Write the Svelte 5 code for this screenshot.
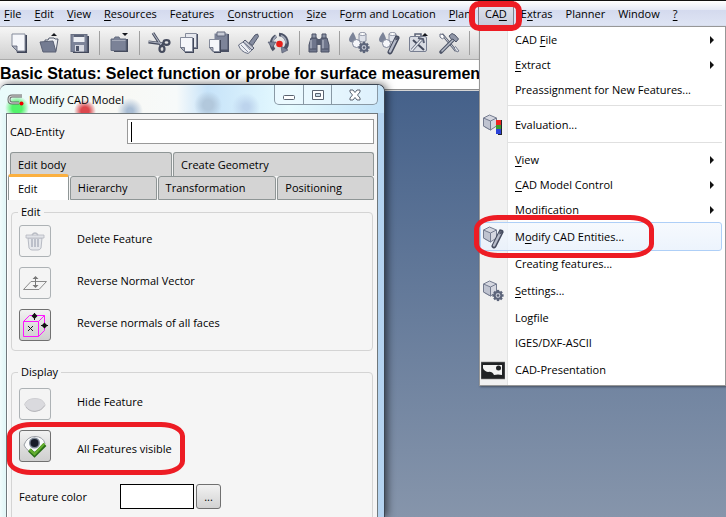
<script lang="ts">
	type MenuEntry = {
		label?: string;
		icon?: string;
		submenu?: boolean;
		active?: boolean;
		separator?: boolean;
	};

	// an underscore marks the mnemonic letter that follows it
	const menus = [
		'_File',
		'_Edit',
		'_View',
		'_Resources',
		'Fe_atures',
		'_Construction',
		'_Size',
		'F_orm and Location',
		'_Plan',
		'CA_D',
		'E_xtras',
		'Planner',
		'Window',
		'_?'
	];

	const tools = [
		'new',
		'open',
		'save',
		'|',
		'folder',
		'|',
		'cut',
		'copy',
		'paste',
		'brush',
		'rotate',
		'|',
		'find',
		'|',
		'feature settings',
		'feature edit',
		'toolbox',
		'tools',
		'|'
	];

	const cadMenu: MenuEntry[] = [
		{ label: 'CAD _File', submenu: true },
		{ label: '_Extract', submenu: true },
		{ label: 'Preassignment for New Features...' },
		{ separator: true },
		{ label: 'Evaluation...', icon: 'evaluation' },
		{ separator: true },
		{ label: '_View', submenu: true },
		{ label: '_CAD Model Control', submenu: true },
		{ label: '_Modification', submenu: true },
		{ label: 'M_odify CAD Entities...', icon: 'modify', active: true },
		{ label: 'Creating features...' },
		{ label: '_Settings...', icon: 'settings' },
		{ label: 'Logfile' },
		{ label: 'IGES/DXF-ASCII' },
		{ label: 'CAD-Presentation', icon: 'presentation' }
	];

	const editActions = [
		{ id: 'delete', label: 'Delete Feature', disabled: true },
		{ id: 'normal', label: 'Reverse Normal Vector', disabled: true },
		{ id: 'faces', label: 'Reverse normals of all faces', disabled: false }
	];

	const displayActions = [
		{ id: 'hide', label: 'Hide Feature', disabled: true },
		{ id: 'show', label: 'All Features visible', disabled: false }
	];

	const teeth = [0, 45, 90, 135, 180, 225, 270, 315];

	let tab = $state('Edit');
	let entity = $state('');

	function split(label: string) {
		const i = label.indexOf('_');
		if (i < 0) return [label, '', ''];
		return [label.slice(0, i), label[i + 1], label.slice(i + 2)];
	}
</script>

{#snippet mnemonic(label: string)}
	{@const parts = split(label)}
	<span>{parts[0]}{#if parts[1]}<u>{parts[1]}</u>{/if}{parts[2]}</span>
{/snippet}

{#snippet gear(x: number, y: number)}
	<g transform="translate({x} {y})">
		{#each teeth as a}
			<rect x="-1.2" y="-5.6" width="2.4" height="3" fill="#5c647a" transform="rotate({a})" />
		{/each}
		<circle r="3.4" fill="#c3c7d3" stroke="#5c647a" stroke-width="2" />
		<circle r="1.2" fill="#555c70" />
	</g>
{/snippet}

{#snippet solids()}
	<path d="M6 1Q2 6.500 2 8.500a3.500 3 0 0 0 7 0Q9 6 6 1Z" fill="#7b8398" />
	<path d="M12 3v7q3.500 2 7 0V3Z" fill="#dfe2ea" stroke="#777e92" stroke-width=".8" />
	<ellipse cx="15.500" cy="3" rx="3.500" ry="1.500" fill="#fff" stroke="#777e92" stroke-width=".8" />
	<circle cx="9.500" cy="12.500" r="4" fill="#f5f6fa" stroke="#7c8396" />
{/snippet}

{#snippet wrench()}
	<path d="m13 21 7-14" stroke="#454b5e" stroke-width="5" stroke-linecap="round" />
	<path d="m13 20.500 6.500-13" stroke="#b6bbc9" stroke-width="2.400" stroke-linecap="round" />
	<path d="M19 4.500v4l3-1.500" fill="none" stroke="#454b5e" stroke-width="1.200" />
{/snippet}

{#snippet cube()}
	<path d="m8.500 2 7 3v8l-6 4-7-4V5Z" fill="#d5d7e0" stroke="#747b8f" />
	<path d="m2.500 5 7 3v9l-7-4Z" fill="#bfc3d0" />
	<path d="m2.500 5 7 3 6-3M9.500 8v9M2.500 5v8l7 4" fill="none" stroke="#747b8f" />
{/snippet}

{#snippet hammer()}
	<path d="M5 3 19 20" stroke="#565d70" stroke-width="2.400" />
	<path d="M5 3 19 20" stroke="#d4d7df" stroke-width=".9" />
	<path d="m3 3 3 .500 1.500 2.500-2 2L3 6Z" fill="#fff" stroke="#6a7184" />
	<path d="M17 8 4 21" stroke="#4d5467" stroke-width="3.600" stroke-linecap="round" />
	<path d="M16.500 8.500 4.500 20.500" stroke="#b8bdca" stroke-width="1.400" />
	<path d="m12 5 3-2.500 3 1.500 3.500 4-2.500 3-3-3-1.500.500Z" fill="#9197a8" stroke="#4d5467" />
	<path d="m17 17 3 4 2-1-3.500-4.500Z" fill="#e1e4ea" stroke="#60677a" stroke-width=".8" />
{/snippet}

{#snippet icon(name: string)}
	<svg class="icon" viewBox="0 0 24 24" aria-hidden="true">
		{#if name === 'new'}
			<path d="M6 4h14v18H10Z" fill="#3f4558" />
			<path d="M5 3h13v17h-8l-5-5Z" fill="#f5f6fa" stroke="#858b9b" />
			<path d="M5 15h5v5Z" fill="#aeb3c0" stroke="#5a6175" stroke-width=".8" />
		{:else if name === 'open'}
			<path d="M8 9h3l1-2h5l1 1h3l-2 12H8Z" fill="#eceef2" stroke="#535a6c" />
			<path d="m3 11 13-1 3 11H6Z" fill="#747c92" stroke="#5a6175" />
			<path d="m14 5 3-3 3 3Z" fill="#15171d" />
		{:else if name === 'save'}
			<path d="M5 5h17v17H6Z" fill="#414759" />
			<rect x="4" y="3.500" width="16" height="17" fill="#7d8499" stroke="#686f83" />
			<rect x="6.500" y="4" width="11" height="7" fill="#eceef3" />
			<rect x="6.500" y="4" width="11" height="2" fill="#5b6277" />
			<rect x="8" y="14" width="9" height="6.500" fill="#d8dae2" />
			<rect x="9" y="15" width="3" height="5" fill="#50576b" />
		{:else if name === 'folder'}
			<path d="M6 8h15v13H7Z" fill="#454b5d" />
			<path d="M4 8h3l1-2h4l1 2h6v11.500H4Z" fill="#7b8297" stroke="#656c80" />
			<path d="M5 9.500h13.500" stroke="#a6abba" />
			<path d="M15 2h6l-3 3Z" fill="#15171d" />
		{:else if name === 'cut'}
			<path d="m6 2 9 14M1.500 11 17 13" fill="none" stroke="#454b5d" stroke-width="3" />
			<path d="m6 2 8 12M1.500 10.500 15 12.500" fill="none" stroke="#adb2c0" stroke-width="1.200" />
			<ellipse cx="15" cy="18" rx="2.500" ry="3" fill="none" stroke="#454b5d" stroke-width="2.200" />
			<ellipse cx="19.500" cy="11.500" rx="3" ry="2.300" fill="none" stroke="#454b5d" stroke-width="2.200" />
		{:else if name === 'copy'}
			<path d="M9 3h12v15H9Z" fill="#4a5064" />
			<path d="M8.500 2.500h11v14h-11Z" fill="#e6e8ee" stroke="#858b9b" />
			<path d="M5 7h12v15H8Z" fill="#414759" />
			<path d="M3.500 6.500h12v14h-8l-4-4Z" fill="#f5f6fa" stroke="#858b9b" />
			<path d="M3.500 16.500h4v4Z" fill="#aeb3c0" stroke="#5a6175" stroke-width=".8" />
		{:else if name === 'paste'}
			<path d="M8 3h14v18H8Z" fill="#4a5064" />
			<path d="M7.500 2.500h13v16h-13Z" fill="#7d8499" />
			<path d="M10 1h8v4h-8Z" fill="#c8ccd7" stroke="#60677a" />
			<path d="M4 9h10v13H7Z" fill="#414759" />
			<path d="M2.500 8.500h10v12H6l-3.500-4Z" fill="#f5f6fa" stroke="#858b9b" />
			<path d="M2.500 16.500H6v4Z" fill="#aeb3c0" stroke="#5a6175" stroke-width=".8" />
		{:else if name === 'brush'}
			<path d="m12 12 6-8 2.500-1 1 2.500-6 9Z" fill="#858ca0" stroke="#50576b" />
			<path d="m8 9 9 8-2 2-9-8Z" fill="#c7cad5" stroke="#50576b" />
			<path d="m6 11 9 8-4 3.500c-5-1-8-4-9.500-8.500Z" fill="#eceef3" stroke="#666d81" />
			<path d="m4 14 7 7M7 12l6 7" stroke="#838a9d" />
		{:else if name === 'rotate'}
			<path d="M9 5a9 9 0 0 0-2 14M12 3.500a8.500 8.500 0 0 1 5 15" fill="none" stroke="#4c5366" stroke-width="3.600" />
			<path d="M9.500 5a8 8 0 0 0-3.500 7M14 4.500a8 8 0 0 1 5 8" fill="none" stroke="#a4aaba" stroke-width="1.600" />
			<path d="M1 11h8l-4 6Z" fill="#7b8297" stroke="#4c5366" stroke-width=".6" />
			<path d="m14 15 1 7 6-3Z" fill="#7b8297" stroke="#4c5366" stroke-width=".6" />
			<circle cx="12.500" cy="13" r="3.300" fill="#e71f19" />
		{:else if name === 'find'}
			<path d="M4 7h6v14H2v-7ZM14 7h6l2 7v7h-8Z" fill="#6f768c" stroke="#4a5165" />
			<path d="M5 3h4v4H5Zm10 0h4v4h-4Z" fill="#8c93a6" stroke="#4a5165" />
			<path d="M10 8h4v6h-4Z" fill="#555c70" />
			<path d="M4 9v9M16 9v9" stroke="#a7acba" stroke-width="1.500" />
			<path d="M2.500 18h7M14.500 18h7" stroke="#4a5165" />
		{:else if name === 'feature settings'}
			{@render solids()}
			{@render gear(17, 16.5)}
		{:else if name === 'feature edit'}
			{@render solids()}
			{@render wrench()}
		{:else if name === 'toolbox'}
			<path d="M8 5V3h6v2" fill="none" stroke="#5a6175" stroke-width="1.500" />
			<rect x="2.500" y="5.500" width="17" height="15" rx="1.500" fill="#d9dce3" stroke="#777e91" />
			<path d="m6 9 11 10" stroke="#454b5d" stroke-width="2" />
			<path d="m5 19 9-10" stroke="#6a7184" stroke-width="3" />
			<path d="m5 19 9-10" stroke="#eef0f4" stroke-width="1.200" />
			<path d="m11 7 5 1 1 4" fill="none" stroke="#555c70" stroke-width="2" />
			<path d="m15 5 3-3 3 3Z" fill="#15171d" />
		{:else if name === 'tools'}
			{@render hammer()}
		{:else if name === 'evaluation'}
			{@render cube()}
			<path d="M16 7h5v15h-4Z" fill="#24272f" />
			<rect x="15" y="7" width="5" height="5" fill="#ee2421" />
			<rect x="15" y="12" width="5" height="4" fill="#3e9b2d" />
			<rect x="15" y="16" width="5" height="5" fill="#2b42d7" />
		{:else if name === 'modify'}
			{@render cube()}
			{@render wrench()}
		{:else if name === 'settings'}
			{@render cube()}
			{@render gear(17, 16.5)}
		{:else if name === 'presentation'}
			<path d="M0 4h24v17H0Z" fill="#202224" />
			<path d="M2 7h19v10q-4-1-8 0-2-4-6-3-4-1-5-4Z" fill="#f3f3f3" />
			<circle cx="17.500" cy="10" r="2.500" fill="#202224" />
			<path d="M0 4h24v17H0Z" fill="none" stroke="#8b8b8b" stroke-width=".6" />
		{:else if name === 'delete'}
			<path d="m5 9 1 10q1 2 3 2h6q2 0 3-2l1-10Z" fill="#e6e8ec" stroke="#b7bac3" />
			<path d="M3 6h18v3H3Z" fill="#e1e3e8" stroke="#b5b8c0" stroke-width=".8" />
			<path d="M9 6q3-4 6 0" fill="none" stroke="#b9bcc4" stroke-width="1.400" />
			<path d="M9 10v8M12 10v8M15 10v8" stroke="#aeb2be" stroke-width="1.500" />
		{:else if name === 'normal'}
			<path d="M.500 18.500 8 10.500h15.500l-7.500 8Z" fill="none" stroke="#8a8a8a" />
			<path d="M12.500 6v10" stroke="#777" />
			<path d="m9.500 8 3-3 3 3ZM9.500 14h6l-3 3Z" fill="#777" />
		{:else if name === 'hide'}
			<path d="M1.500 12.500Q4 6.500 12 6.500t10 6Q19 19 12 19T1.500 12.500Z" fill="#dadade" stroke="#ceced2" />
			<path d="M3 15q3 4.500 9 4.500t10-6" fill="none" stroke="#b8b8bd" />
		{:else if name === 'show'}
			<path d="M1 11Q4 2.500 12 2.500t10 7Q18 18 11 18T1 11Z" fill="#fafbfc" stroke="#9a9ea5" />
			<circle cx="11.500" cy="9" r="5.500" fill="#7d8796" />
			<circle cx="11.500" cy="9" r="4" fill="#171c27" />
			<path d="m6.500 16 5 5L22 10.500" fill="none" stroke="#286d16" stroke-width="4" />
			<path d="m6.500 15.500 5 4.500L21.500 9.500" fill="none" stroke="#63ad2e" stroke-width="2.400" />
		{/if}
	</svg>
{/snippet}

{#snippet facesIcon()}
	<svg class="faces" viewBox="0 0 30 30" aria-hidden="true">
		<path d="M3.500 11.500h15v15h-15ZM3.500 11.500l6-6h15l-6 6M24.500 5.500v15l-6 6" fill="none" stroke="#ff14ff" />
		<path d="m8 16 5 5m0-5-5 5" stroke="#222" />
		<path d="M14.500 3v7M21 15.500h7" stroke="#111" />
		<path d="m11.500 6 3-3 3 3-3 3ZM21.500 15.500l3-3 3 3-3 3Z" fill="#111" />
	</svg>
{/snippet}

{#snippet action(item: { id: string; label: string; disabled: boolean })}
	<div class="action" class:marked={item.id === 'show'}>
		<button id={item.id} class="square" disabled={item.disabled}>
			{#if item.id === 'faces'}
				{@render facesIcon()}
			{:else}
				{@render icon(item.id)}
			{/if}
		</button>
		<label for={item.id}>{item.label}</label>
	</div>
{/snippet}

<div class="app">
	<nav class="menubar">
		{#each menus as menu}
			<button class="menu" class:open={menu === 'CA_D'}>{@render mnemonic(menu)}</button>
		{/each}

		<div class="dropdown" role="menu">
			{#each cadMenu as entry}
				{#if entry.separator}
					<div class="separator"></div>
				{:else}
					<button
						class="entry"
						class:tall={entry.icon}
						class:active={entry.active}
						role="menuitem"
					>
						<span class="gutter">
							{#if entry.icon}
								{@render icon(entry.icon)}
							{/if}
						</span>
						{@render mnemonic(entry.label ?? '')}
						{#if entry.submenu}
							<svg class="arrow" viewBox="0 0 4 8" aria-hidden="true">
								<path d="M0 0v8l4-4Z" fill="#111" />
							</svg>
						{/if}
					</button>
				{/if}
			{/each}
		</div>
	</nav>

	<div class="toolbar" role="toolbar">
		{#each tools as tool}
			{#if tool === '|'}
				<span class="divider"></span>
			{:else}
				<button class="tool" aria-label={tool}>{@render icon(tool)}</button>
			{/if}
		{/each}
	</div>

	<div class="status">Basic Status: Select function or probe for surface measurement</div>

	<main class="desktop">
		<section class="window">
			<header class="titlebar">
				<svg class="logo" viewBox="0 0 18 12" aria-hidden="true">
					<path d="M15 2H5Q2 2 2 5.500T5 9h7" fill="none" stroke="#696969" stroke-width="3" />
					<path d="M15 2H5Q2 2 2 5.500T5 9h7" fill="none" stroke="#ddd" stroke-width="1.200" />
					<circle cx="14.500" cy="9.500" r="2" fill="#f00000" />
				</svg>
				<span class="title">Modify CAD Model</span>
				<div class="controls">
					<button aria-label="Minimize">
						<svg viewBox="0 0 14 14"><rect x="1.500" y="7.500" width="11" height="4" rx="1" fill="#fff" stroke="#5a6370" /></svg>
					</button>
					<button aria-label="Maximize">
						<svg viewBox="0 0 14 14">
							<path d="M1.500 2.500h11v9h-11Z" fill="#fff" stroke="#5a6370" />
							<path d="M4.500 5.500h5v3h-5Z" fill="#cbdce8" stroke="#5a6370" />
						</svg>
					</button>
					<button class="close" aria-label="Close">
						<svg viewBox="0 0 14 14"><path d="M2 2h3l2 2.500L9 2h3v2L9.500 7l2.500 3v2H9L7 9.500 5 12H2v-2l2.500-3L2 4Z" fill="#fff" stroke="#5a6370" /></svg>
					</button>
				</div>
			</header>

			<div class="content">
				<div class="entity">
					<label for="entity">CAD-Entity</label>
					<input id="entity" type="text" bind:value={entity} />
				</div>

				<div class="tabs" role="tablist">
					<div class="tabrow upper">
						{#each ['Edit body', 'Create Geometry'] as name}
							<button class="tab" role="tab" aria-selected={tab === name} onclick={() => (tab = name)}>{name}</button>
						{/each}
					</div>
					<div class="tabrow lower">
						{#each ['Edit', 'Hierarchy', 'Transformation', 'Positioning'] as name}
							<button class="tab" class:current={tab === name} role="tab" aria-selected={tab === name} onclick={() => (tab = name)}>{name}</button>
						{/each}
					</div>
				</div>

				<div class="panel">
					<fieldset>
						<legend>Edit</legend>
						{#each editActions as item}
							{@render action(item)}
						{/each}
					</fieldset>
					<fieldset class="display">
						<legend>Display</legend>
						{#each displayActions as item}
							{@render action(item)}
						{/each}
						<div class="color">
							<label for="color">Feature color</label>
							<input id="color" type="text" readonly />
							<button aria-label="Choose color">...</button>
						</div>
					</fieldset>
				</div>
			</div>
		</section>
	</main>
</div>

<style>
	:global(body) {
		overflow: hidden;
	}
	.app {
		--red: #ed1c24;
		display: flex;
		flex-direction: column;
		height: 100vh;
		font-family: 'Open Sans', 'Noto Sans', sans-serif;
		font-size: 11px;
		line-height: 16px;
		color: #000;
	}
	button,
	input {
		box-sizing: border-box;
		margin: 0;
		padding: 0;
		font: inherit;
		color: inherit;
		border: none;
		border-radius: 0;
		background: none;
	}
	u {
		text-underline-offset: 2px;
	}
	.icon {
		flex: none;
		display: block;
		width: 24px;
		height: 24px;
		fill: none;
	}
	.faces {
		flex: none;
		display: block;
		width: 30px;
		height: 30px;
	}

	.menubar {
		position: relative;
		z-index: 2;
		display: flex;
		flex: none;
		gap: 1px;
		box-sizing: border-box;
		height: 27px;
		border-top: 1px solid #111;
		border-bottom: 1px solid #b4b6bd;
		background: linear-gradient(#fff, #e6eaf6 34%, #d4daee 36%, #dfe5f4);
	}
	.menu {
		flex: none;
		height: 25px;
		padding: 0 6px;
		white-space: nowrap;
	}
	.menu:first-child {
		padding-left: 4px;
	}
	.menu.open {
		position: relative;
		border: 1px solid #7d8290;
		border-bottom: none;
		background: linear-gradient(#e3e6ee, #c6cbdb);
	}
	.menu.open::after {
		content: '';
		position: absolute;
		z-index: 4;
		inset: -1px -9px -5px -10px;
		border: 6px solid var(--red);
		border-radius: 10px;
	}

	.dropdown {
		position: absolute;
		z-index: -1;
		top: 25px;
		right: 0;
		box-sizing: border-box;
		width: 247px;
		padding-bottom: 1px;
		border: 1px solid #979797;
		background: linear-gradient(90deg, #f1f1f1 27px, #e2e3e3 27px, #e2e3e3 28px, #fff 28px);
		box-shadow: 1px 1px 2px rgba(0, 0, 0, 0.4);
	}
	.entry {
		display: flex;
		align-items: center;
		width: calc(100% - 3px);
		height: 25px;
		border: 1px solid transparent;
		border-radius: 3px;
		text-align: left;
	}
	.entry.tall {
		height: 29px;
	}
	.entry.active {
		position: relative;
		border-color: #aecff7;
		background: linear-gradient(rgba(244, 248, 253, 0.8), rgba(232, 241, 252, 0.8));
	}
	.entry.active::after {
		content: '';
		position: absolute;
		inset: -8px 67px -8px -7px;
		border: 5px solid var(--red);
		border-radius: 24px / 14px;
	}
	.gutter {
		flex: none;
		width: 34px;
	}
	.arrow {
		width: 4px;
		height: 8px;
		margin-left: auto;
		margin-right: 7px;
	}
	.separator {
		height: 8px;
		margin: 0 3px 0 28px;
		background: linear-gradient(#e0e0e0, #e0e0e0) 0 3px / 100% 1px no-repeat;
	}

	.toolbar {
		display: flex;
		flex: none;
		align-items: center;
		box-sizing: border-box;
		height: 33px;
		padding-left: 4px;
		border-bottom: 1px solid #aaa;
		background: linear-gradient(#f6f6f6, #cfcfcf);
	}
	.tool {
		display: flex;
		justify-content: center;
		width: 30px;
	}
	.divider {
		width: 10px;
		height: 24px;
		background: linear-gradient(#a0a0a0, #a0a0a0) 5px 0 / 1px 100% no-repeat;
	}

	.status {
		flex: none;
		overflow: hidden;
		height: 29px;
		border-bottom: 1px solid #8e8e8e;
		background: #fff;
		font: bold 16px/27px 'Liberation Sans', Arial, sans-serif;
		white-space: nowrap;
	}

	.desktop {
		position: relative;
		flex: 1;
		min-height: 0;
		border-top: 1px solid #d4d4d4;
		background: linear-gradient(#45618a, #8695ab);
	}
	.window {
		position: absolute;
		top: -7px;
		bottom: 0;
		left: 0;
		display: flex;
		flex-direction: column;
		box-sizing: border-box;
		width: 385px;
		padding: 0 6px;
		border: 1px solid #3c4653;
		border-left: none;
		border-bottom: none;
		border-radius: 7px 7px 0 0;
		background: linear-gradient(90deg, #f2fcfc, #e4f7f8 4px, #e4f7f8 50%, #b4d3f0);
		box-shadow:
			inset 0 1px #fff,
			2px 0 8px rgba(0, 0, 0, 0.6);
	}
	.titlebar {
		display: flex;
		flex: none;
		height: 28px;
		margin: 0 -6px;
		padding: 0 6px;
		border-radius: 7px 7px 0 0;
		background:
			radial-gradient(circle at 17px 23px, #52f36a 5px, rgba(82, 243, 106, 0) 12px),
			radial-gradient(circle at 85px 26px, #dc474d 4px, rgba(226, 71, 77, 0) 11px),
			radial-gradient(circle at 130px 26px, #a9bdd4 3px, rgba(159, 180, 205, 0) 13px),
			radial-gradient(circle at 208px 20px, #b2c8dc 5px, rgba(185, 205, 224, 0) 14px),
			radial-gradient(circle at 246px 22px, #bdd4ed 3px, rgba(192, 214, 238, 0) 14px),
			linear-gradient(90deg, #e9fbfb, #f8f8f4 28%, #f7fafa 46%, #c7e3f9 54%, #e6fbff 75%, #c2e2f8);
	}
	.logo {
		width: 18px;
		height: 12px;
		margin: 9px 4px 0 1px;
	}
	.title {
		margin-top: 7px;
	}
	.controls {
		display: flex;
		height: 19px;
		margin-left: auto;
		border: 1px solid #8999a5;
		border-top: none;
		border-radius: 0 0 5px 5px;
		background: rgba(240, 250, 255, 0.6);
	}
	.controls button {
		display: flex;
		align-items: center;
		justify-content: center;
		width: 28px;
	}
	.controls button + button {
		border-left: 1px solid #8999a5;
	}
	.controls .close {
		width: 46px;
	}
	.controls svg {
		width: 14px;
		height: 14px;
	}

	.content {
		flex: 1;
		min-height: 0;
		overflow: hidden;
		border: 1px solid #70787c;
		border-bottom: none;
		background: #f5f5f5;
		box-shadow: inset 1px 0 #fff;
	}
	.entity {
		display: flex;
		align-items: center;
		padding: 5px 3px 8px;
	}
	.entity label {
		width: 117px;
	}
	.entity input {
		flex: 1;
		min-width: 0;
		height: 25px;
		padding: 0 4px;
		border: 1px solid #999;
		background: linear-gradient(#000, #000) 3px 50% / 1px 20px no-repeat #fff;
	}

	.tabs {
		padding: 0 3px;
	}
	.tabrow {
		display: grid;
		height: 24px;
	}
	.upper {
		grid-template-columns: 162fr 201fr;
		gap: 1px;
	}
	.lower {
		grid-template-columns: 61fr 87fr 119fr 97fr;
		gap: 1px;
		margin-left: -2px;
	}
	.tab {
		padding-left: 7px;
		border: 1px solid #8f9696;
		border-radius: 3px 3px 0 0;
		background: #d4d4d4;
		text-align: left;
	}
	.upper .tab {
		border-bottom: none;
	}
	.tab.current {
		margin-top: -2px;
		padding-left: 9px;
		border-top: 3px solid #fbb040;
		border-bottom: none;
		background: #fff;
	}

	.panel {
		padding: 4px 4px 0;
	}
	fieldset {
		min-width: 0;
		margin: 0;
		padding: 5px 7px 9px;
		border: 1px solid #d4d4d4;
		border-radius: 4px;
	}
	fieldset.display {
		height: 200px;
		margin-top: 13px;
		padding-top: 8px;
	}
	legend {
		margin-left: -1px;
		padding: 0 3px;
	}
	.action {
		position: relative;
		display: flex;
		align-items: center;
		height: 32px;
	}
	.action label {
		padding-bottom: 4px;
	}
	.action + .action {
		margin-top: 10px;
	}
	.square {
		display: flex;
		align-items: center;
		justify-content: center;
		width: 32px;
		height: 32px;
		margin-right: 26px;
		border: 1px solid #707070;
		border-radius: 3px;
		background: linear-gradient(#f2f2f2, #ddd 55%, #cfcfcf);
	}
	.square:disabled {
		border-color: #adb2b5;
		background: #f4f4f4;
	}
	.action.marked label {
		padding: 5px 0 0;
	}
	.marked::after {
		content: '';
		position: absolute;
		top: -8px;
		bottom: -13px;
		left: -12px;
		box-sizing: border-box;
		width: 178px;
		border: 5px solid var(--red);
		border-radius: 24px / 14px;
		pointer-events: none;
	}
	.color {
		display: flex;
		align-items: center;
		gap: 2px;
		margin-top: 22px;
	}
	.color label {
		width: 99px;
	}
	.color input {
		width: 74px;
		height: 25px;
		border: 1px solid #000;
		background: #fff;
	}
	.color button {
		width: 25px;
		height: 25px;
		border: 1px solid #707070;
		border-radius: 3px;
		background: linear-gradient(#f2f2f2, #d2d2d2);
	}
</style>
